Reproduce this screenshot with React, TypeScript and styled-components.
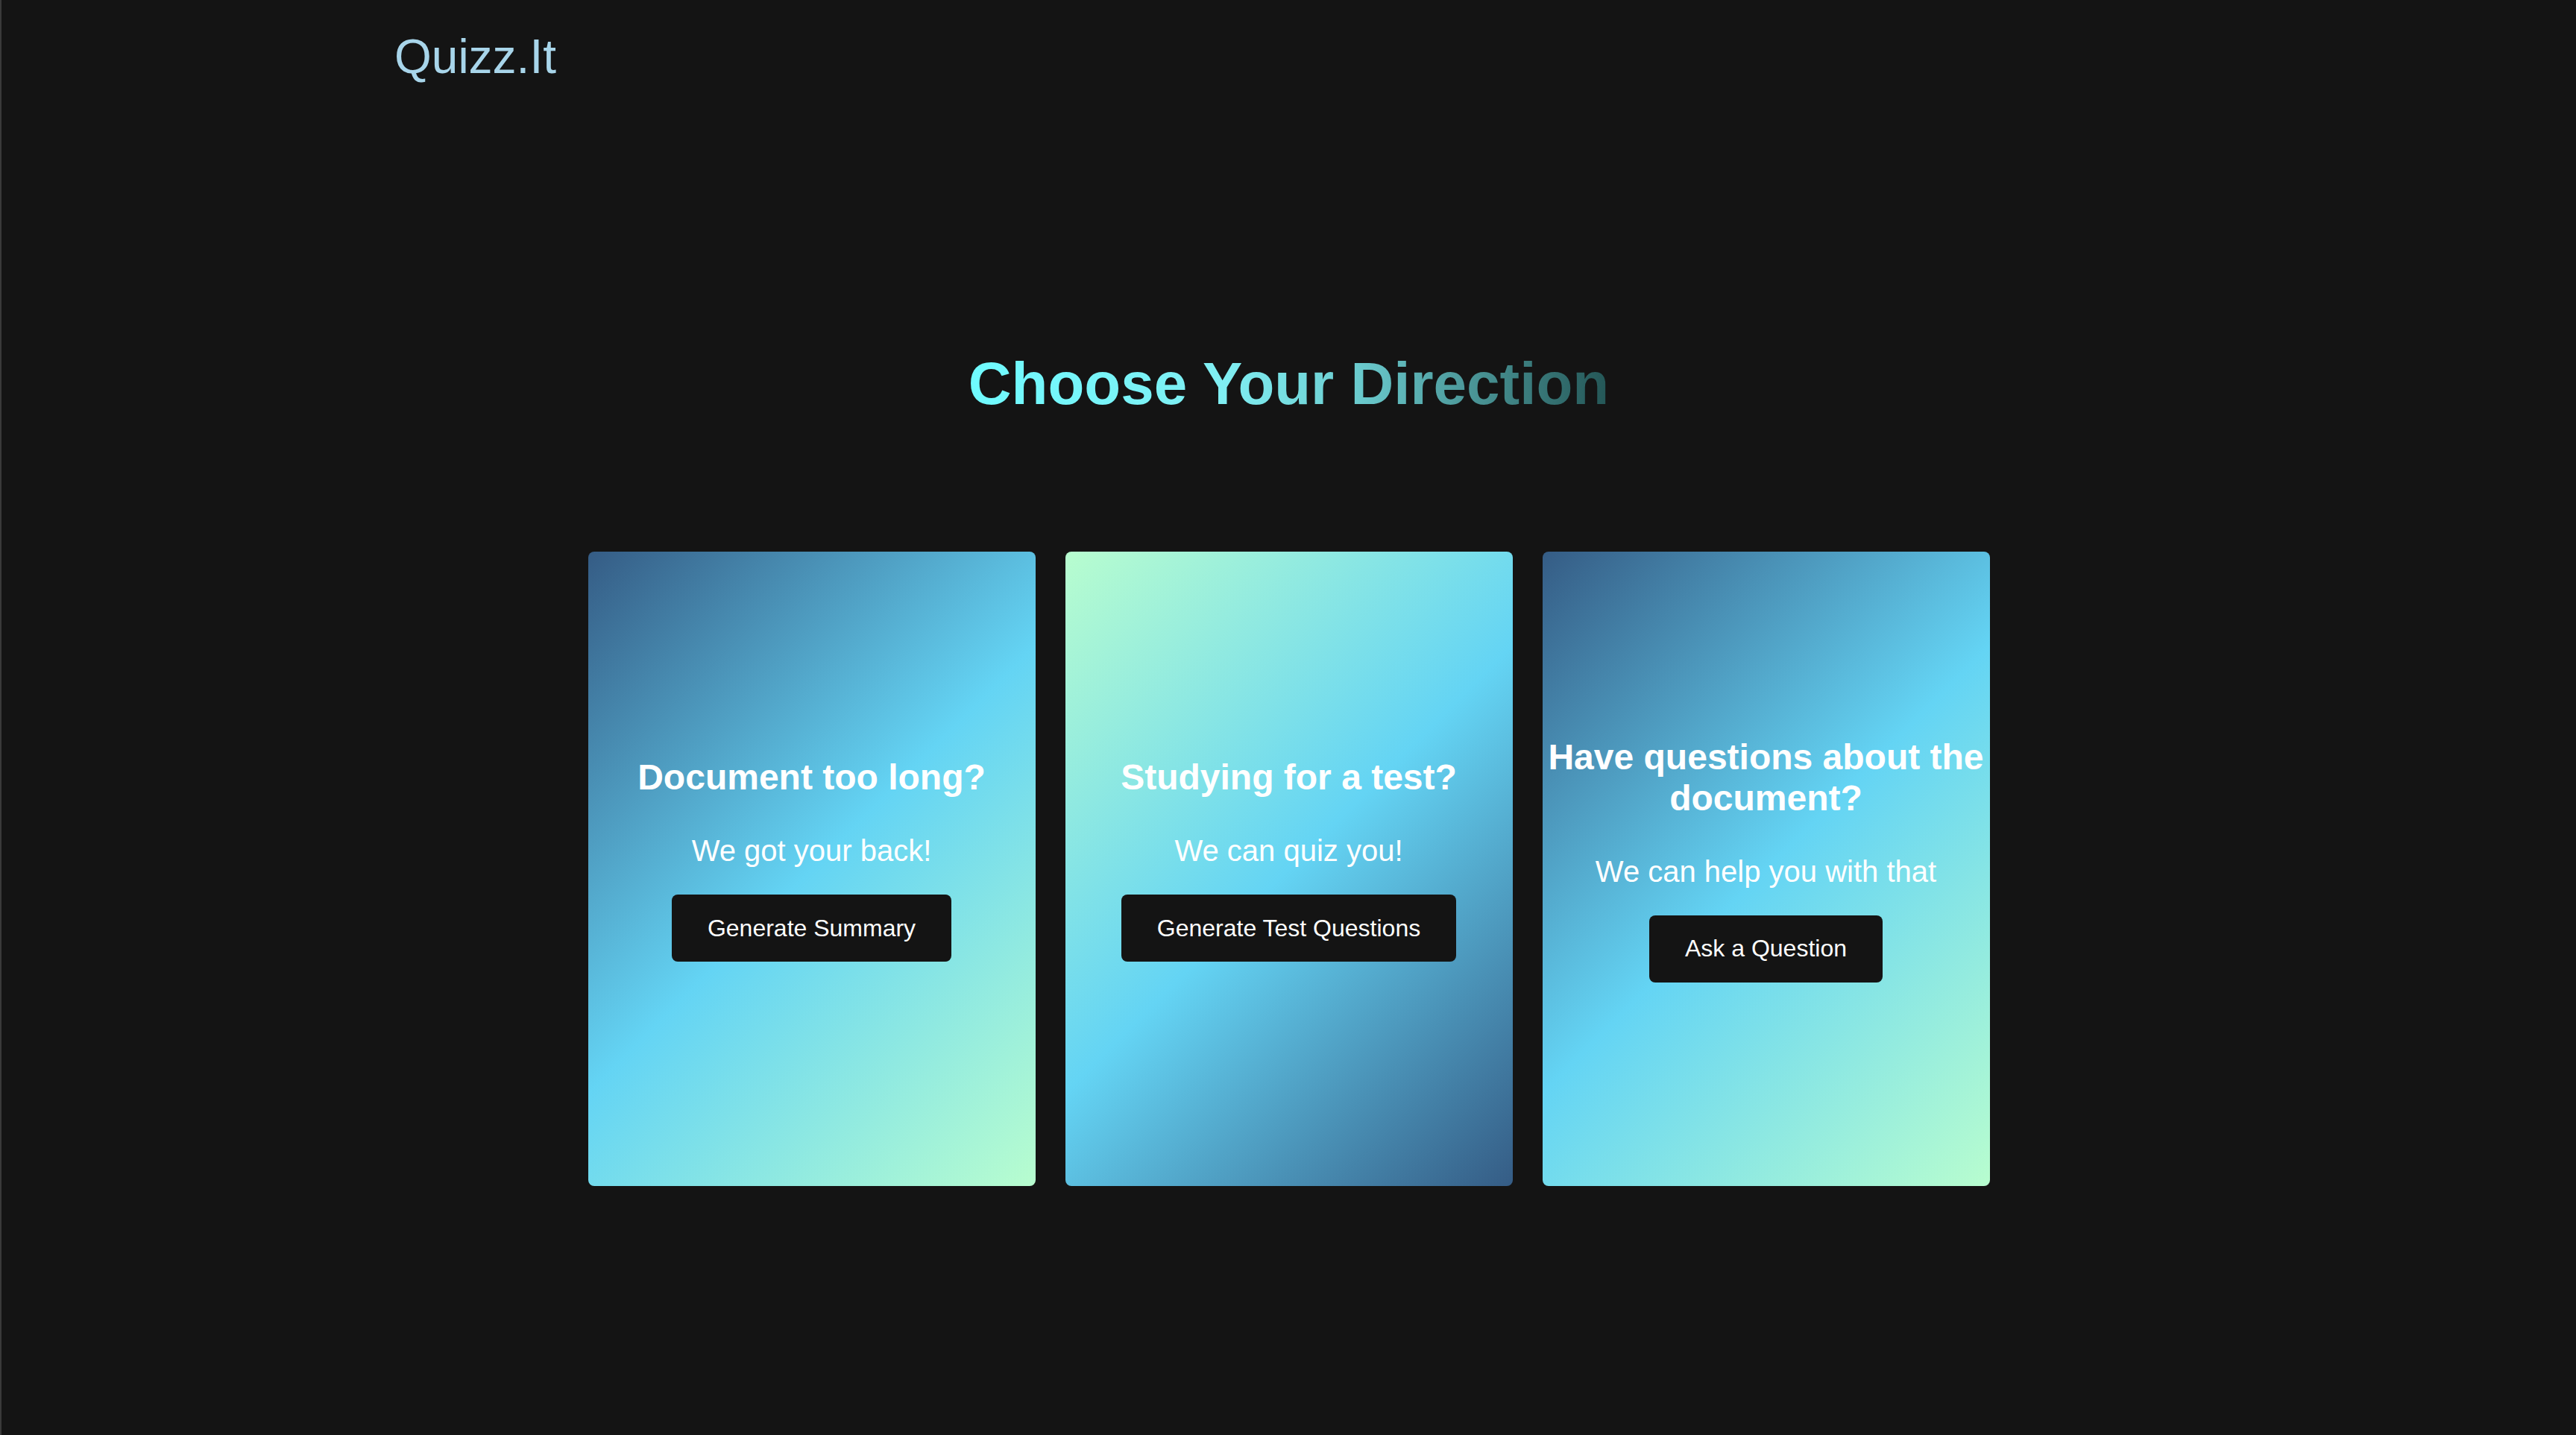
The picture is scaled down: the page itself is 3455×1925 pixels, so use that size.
import styled, { createGlobalStyle } from "styled-components";

const GlobalStyle = createGlobalStyle`
  html, body {
    margin: 0;
    padding: 0;
    background-color: #141414;
  }
  body {
    font-family: "Liberation Sans", Arial, Helvetica, sans-serif;
  }
  * {
    box-sizing: border-box;
  }
`;

const Page = styled.div`
  min-height: 100vh;
  background-color: #141414;
  border-left: 2px solid #3a3a3a;
  display: flex;
  flex-direction: column;
`;

const Header = styled.header`
  padding: 40px 0 0 527px;
`;

const Logo = styled.a`
  font-size: 64px;
  line-height: 72px;
  color: #a8d5ea;
  text-decoration: none;
`;

const Main = styled.main`
  display: flex;
  flex-direction: column;
  align-items: center;
`;

const Title = styled.h1`
  margin: 358px 0 181px;
  font-size: 80px;
  line-height: 89px;
  font-weight: 700;
  background: linear-gradient(to right, #6ffbff 0%, #80eef2 40%, #6ccdd0 60%, #245656 100%);
  -webkit-background-clip: text;
  background-clip: text;
  color: transparent;
`;

const CardRow = styled.div`
  display: flex;
  gap: 40px;
`;

const Card = styled.div<{ $flip?: boolean }>`
  width: 600px;
  height: 851px;
  border-radius: 8px;
  background: ${(p) =>
    p.$flip
      ? "linear-gradient(135deg, #b8fdcf 0%, #64d4f4 50%, #355c85 100%)"
      : "linear-gradient(135deg, #355c85 0%, #64d4f4 50%, #b8fdcf 100%)"};
  display: flex;
  flex-direction: column;
  align-items: center;
  justify-content: center;
  text-align: center;
  color: #ffffff;
`;

const CardTitle = styled.h2`
  margin: 0 0 48px;
  font-size: 48px;
  line-height: 55px;
  font-weight: 700;
`;

const CardText = styled.p`
  margin: 0 0 36px;
  font-size: 40px;
  line-height: 46px;
`;

const ActionButton = styled.button`
  margin: 0 0 26px;
  padding: 0 48px;
  height: 90px;
  border: none;
  border-radius: 8px;
  background-color: #141414;
  color: #ffffff;
  font-family: "Liberation Sans", Arial, Helvetica, sans-serif;
  font-size: 32px;
  cursor: pointer;
`;

const cards = [
  {
    title: "Document too long?",
    text: "We got your back!",
    action: "Generate Summary",
    flip: false,
  },
  {
    title: "Studying for a test?",
    text: "We can quiz you!",
    action: "Generate Test Questions",
    flip: true,
  },
  {
    title: "Have questions about the document?",
    text: "We can help you with that",
    action: "Ask a Question",
    flip: false,
  },
];

const App = () => {
  return (
    <Page>
      <GlobalStyle />
      <Header>
        <Logo href="#">Quizz.It</Logo>
      </Header>
      <Main>
        <Title>Choose Your Direction</Title>
        <CardRow>
          {cards.map((c) => (
            <Card key={c.title} $flip={c.flip}>
              <CardTitle>{c.title}</CardTitle>
              <CardText>{c.text}</CardText>
              <ActionButton>{c.action}</ActionButton>
            </Card>
          ))}
        </CardRow>
      </Main>
    </Page>
  );
};

export default App;
